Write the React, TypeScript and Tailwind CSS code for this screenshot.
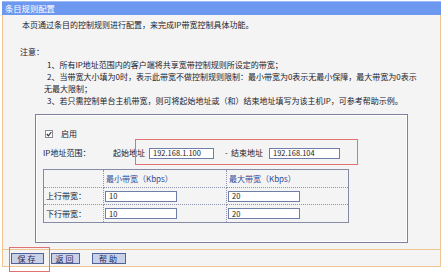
import React from "react";

const font = { fontFamily: '"Noto Sans CJK SC", "Noto Sans", sans-serif' };

function Btn({ label, w }: { label: string; w: string }) {
  return (
    <div
      className={`${w} h-[11px] border border-[#52639a] bg-[#c9d1e8] flex items-center justify-center text-[8px] leading-none text-[#1b2757] tracking-[2px]`}
    >
      {label}
    </div>
  );
}

function Field({ value, w }: { value: string; w: string }) {
  return (
    <div
      className={`${w} h-[11px] border border-[#6f7ea8] bg-white flex items-center pl-[3px] text-[7.5px] leading-none text-[#222]`}
    >
      {value}
    </div>
  );
}

export default function App() {
  return (
    <div className="relative w-[443px] h-[277px] bg-white text-[8px] text-[#22222c]" style={font}>
      {/* title bar */}
      <div className="mx-[2px] mt-[1px] h-[14px] bg-[#6c99ef] border-t border-[#9dbcf5] text-white pl-[3px] leading-[13px] text-[8.3px]">
        条目规则配置
      </div>

      {/* main panel */}
      <div className="mx-[2px] h-[252px] border-x border-b border-[#f0c690] bg-[#f4f4f4] flex flex-col">
        <div className="h-[234px] flex flex-col">
          <div className="pl-[19px] mt-[4px] leading-[12px]">
            本页通过条目的控制规则进行配置，来完成IP带宽控制具体功能。
          </div>
          <div className="pl-[17px] mt-[15px] leading-[12px]">注意：</div>
          <div className="mt-[1px] leading-[12px]">
            <div className="pl-[44px]">1、所有IP地址范围内的客户端将共享宽带控制规则所设定的带宽；</div>
            <div className="pl-[44px]">
              2、当带宽大小填为0时，表示此带宽不做控制规则限制：最小带宽为0表示无最小保障，最大带宽为0表示
            </div>
            <div className="pl-[41px]">无最大限制；</div>
            <div className="pl-[44px]">
              3、若只需控制单台主机带宽，则可将起始地址或（和）结束地址填写为该主机IP，可参考帮助示例。
            </div>
          </div>

          {/* inner box */}
          <div className="ml-[32px] mt-[7px] w-[373px] h-[129px] border border-[#7d809e]">
            <div className="h-full border border-white flex flex-col pl-[6px]">
              <div className="mt-[14px] h-[8px] flex items-center">
                <svg width="8" height="8" viewBox="0 0 8 8" className="ml-[2px]">
                  <rect x="0.5" y="0.5" width="7" height="7" fill="#fff" stroke="#8a8a98" />
                  <path d="M1.8 4 L3.4 5.8 L6.3 2" fill="none" stroke="#333" strokeWidth="1.2" />
                </svg>
                <span className="ml-[8px] leading-none">启用</span>
              </div>
              <div className="mt-[8px] h-[14px] flex items-center">
                <span className="w-[70px]">IP地址范围：</span>
                <span className="w-[36px]">起始地址</span>
                <Field value="192.168.1.100" w="w-[65px]" />
                <span className="ml-[11px] w-[6px]">-</span>
                <span className="w-[38px]">结束地址</span>
                <Field value="192.168.104" w="w-[71px]" />
              </div>

              {/* table */}
              <div className="mt-[9px] w-[306px] border border-[#858aa6] grid grid-cols-[60px_123px_1fr]">
                <div className="h-[18px] border-r border-b border-dotted border-[#8e92aa]" />
                <div className="h-[18px] border-r border-b border-dotted border-[#8e92aa] flex items-center pl-[2px] text-[#2d4a9a]">
                  最小带宽（Kbps）
                </div>
                <div className="h-[18px] border-b border-dotted border-[#8e92aa] flex items-center pl-[2px] text-[#2d4a9a]">
                  最大带宽（Kbps）
                </div>

                <div className="h-[17px] border-r border-b border-dotted border-[#8e92aa] flex items-center pl-[2px]">
                  上行带宽：
                </div>
                <div className="h-[17px] border-r border-b border-dotted border-[#8e92aa] flex items-center pl-[1px]">
                  <Field value="10" w="w-[72px]" />
                </div>
                <div className="h-[17px] border-b border-dotted border-[#8e92aa] flex items-center pl-[1px]">
                  <Field value="20" w="w-[72px]" />
                </div>

                <div className="h-[17px] border-r border-dotted border-[#8e92aa] flex items-center pl-[2px]">
                  下行带宽：
                </div>
                <div className="h-[17px] border-r border-dotted border-[#8e92aa] flex items-center pl-[1px]">
                  <Field value="10" w="w-[72px]" />
                </div>
                <div className="h-[17px] flex items-center pl-[1px]">
                  <Field value="20" w="w-[72px]" />
                </div>
              </div>
            </div>
          </div>
        </div>

        {/* button row */}
        <div className="border-t border-[#f0c690] flex-1 flex items-start pt-[3px] pl-[8px] gap-[7px]">
          <Btn label="保存" w="w-[33px]" />
          <Btn label="返回" w="w-[29px]" />
          <div className="ml-[5px]">
            <Btn label="帮助" w="w-[34px]" />
          </div>
        </div>
      </div>

      {/* red annotation boxes */}
      <div className="absolute left-[135px] top-[138px] w-[223px] h-[26px] border border-[#e07272]" />
      <div className="absolute left-[9px] top-[246px] w-[41px] h-[25px] border border-[#e07272]" />
    </div>
  );
}
